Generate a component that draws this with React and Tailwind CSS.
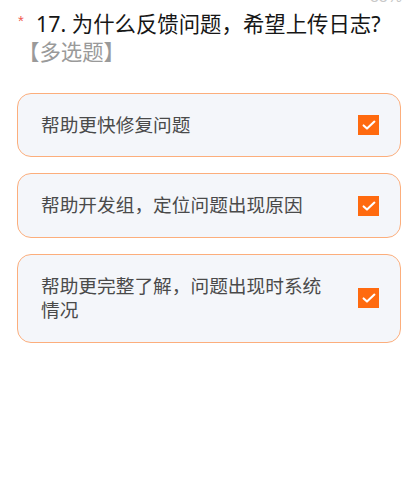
import React from "react";

const options = [
  "帮助更快修复问题",
  "帮助开发组，定位问题出现原因",
  "帮助更完整了解，问题出现时系统情况",
];

function Check() {
  return (
    <div className="flex h-[20px] w-[21px] shrink-0 items-center justify-center bg-[#ff6a0f]">
      <svg width="14" height="14" viewBox="0 0 14 14" fill="none">
        <polyline
          points="1.6,7.4 5,10.6 12.4,3.6"
          stroke="#ffffff"
          strokeWidth="2.1"
          strokeLinecap="round"
          strokeLinejoin="round"
        />
      </svg>
    </div>
  );
}

export default function App() {
  return (
    <div
      className="min-h-[492px] w-[414px] bg-white"
      style={{ fontFamily: '"Noto Sans", "Noto Sans CJK SC", sans-serif' }}
    >
      <div className="flex h-[4px] items-end justify-end overflow-hidden pr-[12px]">
        <span
          className="text-[16px] leading-[14px] text-[#c8c8c8]"
          style={{ fontFamily: '"Liberation Sans", sans-serif' }}
        >
          88%
        </span>
      </div>
      <div className="mt-[6px] pl-[18px] pr-[8px] text-[21.4px] leading-[28px] text-[#161616]">
        <span
          className="inline-block w-[18px] align-top text-[15px] leading-[22px] text-[#f05a50]"
          style={{ fontFamily: '"Liberation Sans", sans-serif' }}
        >
          *
        </span>
        <span>17. 为什么反馈问题，希望上传日志?</span>
        <span className="block text-[#9a9a9a]">【多选题】</span>
      </div>
      <div className="ml-[17px] mr-[13px] mt-[27px] flex flex-col gap-[16px]">
        {options.map((t) => (
          <div
            key={t}
            className="flex items-center rounded-[14px] border border-[#fcae7c] bg-[#f4f6fa] py-[19px] pl-[23px] pr-[21px]"
          >
            <div className="mr-[30px] flex-1 text-[18.7px] leading-[24.4px] text-[#4a4a4a]">
              {t}
            </div>
            <Check />
          </div>
        ))}
      </div>
    </div>
  );
}
